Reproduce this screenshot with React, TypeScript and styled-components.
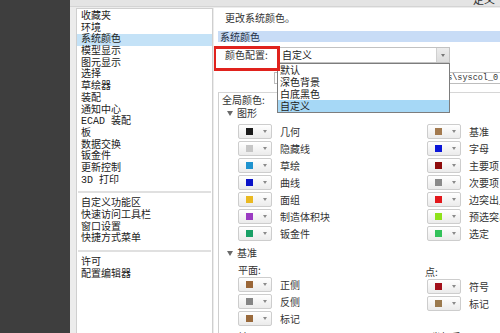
import React from 'react'
import styled, { createGlobalStyle } from 'styled-components'

const cjk = `"Noto Sans CJK SC", "Noto Sans", sans-serif`

const GlobalStyle = createGlobalStyle`
  html, body {
    margin: 0;
    padding: 0;
  }
  body {
    font-family: ${cjk};
    overflow: hidden;
  }
`

const Page = styled.div`
  display: flex;
  width: 500px;
  height: 333px;
  overflow: hidden;
  background: #f0f0f0;
`

const Backdrop = styled.div`
  width: 70px;
  flex-shrink: 0;
  background: #3e3e3e;
`

const Dialog = styled.div`
  flex: 1;
  min-width: 0;
  display: flex;
  flex-direction: column;
  background: #ececec;
`

const TitleStrip = styled.div`
  height: 6px;
  flex-shrink: 0;
  display: flex;
  justify-content: flex-end;
  overflow: hidden;
  background: #e4e4e4;
  border-bottom: 1px solid #d4d4d4;
`

const TitleText = styled.span`
  margin-top: -7px;
  padding-right: 5px;
  font-size: 11px;
  line-height: 12px;
  color: #333;
`

const Body = styled.div`
  flex: 1;
  min-height: 0;
  display: flex;
  gap: 1px;
  padding: 1px 0 0 6px;
`

const NavList = styled.div`
  width: 135px;
  flex-shrink: 0;
  padding-top: 2px;
  background: #fff;
  border: 1px solid #cfcfcf;
  border-bottom: none;
  font-family: "Liberation Mono", ${cjk};
  font-size: 10px;
  color: #222;
`

const NavItem = styled.div<{ $selected?: boolean }>`
  height: 11.7px;
  line-height: 11.7px;
  padding-left: 4px;
  white-space: nowrap;
  background: ${p => (p.$selected ? '#c4e2f7' : 'transparent')};
`

const NavDivider = styled.div`
  height: 2px;
  margin: 5px 1px;
  background: #e0e0e0;
`

const Content = styled.div`
  flex: 1;
  min-width: 0;
  overflow: hidden;
  padding-left: 4px;
  background: #fff;
  font-size: 10px;
  color: #333;
`

const Intro = styled.div`
  margin-top: 4px;
  padding-left: 7px;
  line-height: 12px;
  white-space: nowrap;
`

const SectionBar = styled.div`
  margin-top: 7px;
  height: 11px;
  line-height: 11px;
  padding-left: 2px;
  background: #c8dcf6;
  color: #1f2f45;
`

const ConfigRow = styled.div`
  position: relative;
  display: flex;
  align-items: center;
  margin-top: 5px;
  height: 16px;
`

const ConfigLabel = styled.div`
  width: 52px;
  padding-left: 7px;
  flex-shrink: 0;
  line-height: 16px;
`

// red annotation frame drawn over the label
const Callout = styled.div`
  position: absolute;
  left: -5px;
  top: -1px;
  width: 67px;
  height: 25px;
  box-sizing: border-box;
  border: 3px solid #e0221d;
  z-index: 3;
  pointer-events: none;
`

const Combo = styled.div`
  position: relative;
  width: 173px;
  height: 16px;
  box-sizing: border-box;
  display: flex;
  background: #fff;
  border: 1px solid #c2c2c2;
  z-index: 2;
`

const ComboValue = styled.div`
  flex: 1;
  padding-left: 4px;
  line-height: 14px;
  color: #222;
`

const ComboArrow = styled.div`
  width: 12px;
  display: flex;
  align-items: center;
  justify-content: center;
  background: linear-gradient(#ececec, #dcdcdc);
  border-left: 1px solid #d0d0d0;
`

const DownTip = styled.span<{ $size: number; $color: string }>`
  width: 0;
  height: 0;
  border-left: ${p => p.$size}px solid transparent;
  border-right: ${p => p.$size}px solid transparent;
  border-top: ${p => p.$size + 1}px solid ${p => p.$color};
`

const OptionList = styled.div`
  position: absolute;
  left: -1px;
  top: 15px;
  width: 173px;
  box-sizing: border-box;
  background: #fff;
  border: 1px solid #7d7d7d;
`

const OptionItem = styled.div<{ $active?: boolean }>`
  height: 12px;
  line-height: 12px;
  padding-left: 2px;
  color: #222;
  background: ${p => (p.$active ? '#a6d8f6' : 'transparent')};
`

const PathRow = styled.div`
  margin-top: 9px;
  margin-left: 56px;
  height: 12px;
  box-sizing: border-box;
  border: 1px solid #bdbdbd;
  border-right: none;
  overflow: hidden;
  white-space: nowrap;
  padding-left: 14px;
  font-family: "Liberation Mono", monospace;
  font-size: 8.5px;
  line-height: 10px;
  color: #333;
`

const GroupBox = styled.div`
  margin-top: 8px;
  border-top: 1px solid #d6d6d6;
  border-left: 1px solid #cfcfcf;
  height: 400px;
`

const GroupLabel = styled.div`
  padding: 1px 0 0 3px;
  line-height: 12px;
`

const TreeHeader = styled.div<{ $gap: number }>`
  display: flex;
  align-items: center;
  gap: 4px;
  margin-top: ${p => p.$gap}px;
  padding-left: 8px;
  height: 12px;
  line-height: 12px;
`

const Caret = styled.span`
  width: 0;
  height: 0;
  border-left: 3px solid transparent;
  border-right: 3px solid transparent;
  border-top: 5px solid #6a6a6a;
`

const ColorGrid = styled.div<{ $gap: number }>`
  display: flex;
  margin-top: ${p => p.$gap}px;
  padding-left: 19px;
`

const ColorColumn = styled.div<{ $shift?: number }>`
  width: 189px;
  flex-shrink: 0;
  margin-top: ${p => p.$shift || 0}px;
`

const SubHeading = styled.div<{ $indent?: number; $gap?: number }>`
  height: 12px;
  line-height: 12px;
  margin-left: ${p => p.$indent || 0}px;
  margin-top: ${p => p.$gap || 0}px;
  white-space: nowrap;
`

const ColorCell = styled.div`
  display: flex;
  align-items: center;
  gap: 8px;
  height: 17px;
  white-space: nowrap;
`

const ColorButton = styled.div`
  width: 34px;
  height: 15px;
  box-sizing: border-box;
  display: flex;
  align-items: center;
  justify-content: space-between;
  padding: 0 4px 0 7px;
  border: 1px solid #cdcdcd;
  border-radius: 2px;
  background: linear-gradient(#ffffff, #ebebeb);
`

const Swatch = styled.span<{ $color: string }>`
  width: 7px;
  height: 7px;
  background: ${p => p.$color};
`

const ColorName = styled.span`
  color: #333;
`

type Entry = [string, string]

const graphicsLeft: Entry[] = [
  ['#1b1b1b', '几何'],
  ['#c6c6c6', '隐藏线'],
  ['#1f93cf', '草绘'],
  ['#0a12c8', '曲线'],
  ['#eab921', '面组'],
  ['#9b3bc2', '制造体积块'],
  ['#19a066', '钣金件'],
]

const graphicsRight: Entry[] = [
  ['#a37a4f', '基准'],
  ['#0b16d8', '字母'],
  ['#8e0c0c', '主要项'],
  ['#8a8a8a', '次要项'],
  ['#e3171b', '边突出显示'],
  ['#8ee21a', '预选突出显示'],
  ['#33c25a', '选定'],
]

const planes: Entry[] = [
  ['#9a6637', '正侧'],
  ['#858585', '反侧'],
  ['#9a6a3c', '标记'],
]

const points: Entry[] = [
  ['#a2101a', '符号'],
  ['#9b7a4e', '标记'],
]

const navGroups = [
  ['收藏夹', '环境', '系统颜色', '模型显示', '图元显示', '选择', '草绘器', '装配', '通知中心', 'ECAD 装配', '板', '数据交换', '钣金件', '更新控制', '3D 打印'],
  ['自定义功能区', '快速访问工具栏', '窗口设置', '快捷方式菜单'],
  ['许可', '配置编辑器'],
]

const ColorSwatches: React.FC<{ items: Entry[] }> = ({ items }) => (
  <>
    {items.map(([color, name], i) => (
      <ColorCell key={i}>
        <ColorButton>
          <Swatch $color={color} />
          <DownTip $size={2} $color="#8a8a8a" />
        </ColorButton>
        <ColorName>{name}</ColorName>
      </ColorCell>
    ))}
  </>
)

export default function App() {
  return (
    <Page>
      <GlobalStyle />
      <Backdrop />
      <Dialog>
        <TitleStrip>
          <TitleText>定义</TitleText>
        </TitleStrip>
        <Body>
          <NavList>
            {navGroups.map((group, gi) => (
              <React.Fragment key={gi}>
                {gi > 0 && <NavDivider />}
                {group.map(item => (
                  <NavItem key={item} $selected={item === '系统颜色'}>{item}</NavItem>
                ))}
              </React.Fragment>
            ))}
          </NavList>

          <Content>
            <Intro>更改系统颜色。</Intro>
            <SectionBar>系统颜色</SectionBar>

            <ConfigRow>
              <ConfigLabel>颜色配置:</ConfigLabel>
              <Callout />
              <Combo>
                <ComboValue>自定义</ComboValue>
                <ComboArrow>
                  <DownTip $size={2.5} $color="#777" />
                </ComboArrow>
                <OptionList>
                  <OptionItem>默认</OptionItem>
                  <OptionItem>深色背景</OptionItem>
                  <OptionItem>白底黑色</OptionItem>
                  <OptionItem $active>自定义</OptionItem>
                </OptionList>
              </Combo>
            </ConfigRow>

            <PathRow>C:\Users\Administrator\Documents\syscol_0.scl</PathRow>

            <GroupBox>
              <GroupLabel>全局颜色:</GroupLabel>
              <TreeHeader $gap={1}>
                <Caret />
                图形
              </TreeHeader>
              <ColorGrid $gap={4}>
                <ColorColumn>
                  <ColorSwatches items={graphicsLeft} />
                </ColorColumn>
                <ColorColumn>
                  <ColorSwatches items={graphicsRight} />
                </ColorColumn>
              </ColorGrid>

              <TreeHeader $gap={5}>
                <Caret />
                基准
              </TreeHeader>
              <ColorGrid $gap={5}>
                <ColorColumn>
                  <SubHeading>平面:</SubHeading>
                  <ColorSwatches items={planes} />
                  <SubHeading $gap={4}>轴:</SubHeading>
                </ColorColumn>
                <ColorColumn $shift={2}>
                  <SubHeading $indent={-2}>点:</SubHeading>
                  <ColorSwatches items={points} />
                  <SubHeading $indent={4} $gap={19}>坐标系:</SubHeading>
                </ColorColumn>
              </ColorGrid>
            </GroupBox>
          </Content>
        </Body>
      </Dialog>
    </Page>
  )
}
